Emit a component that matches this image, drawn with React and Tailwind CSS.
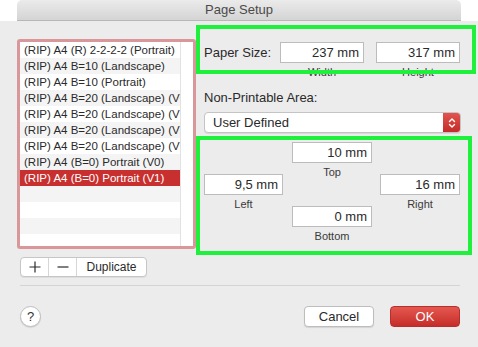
import React from 'react';

const items = [
  '(RIP) A4 (R) 2-2-2-2 (Portrait)',
  '(RIP) A4 B=10 (Landscape)',
  '(RIP) A4 B=10 (Portrait)',
  '(RIP) A4 B=20 (Landscape) (V0)',
  '(RIP) A4 B=20 (Landscape) (V1)',
  '(RIP) A4 B=20 (Landscape) (V2)',
  '(RIP) A4 B=20 (Landscape) (V3)',
  '(RIP) A4 (B=0) Portrait (V0)',
  '(RIP) A4 (B=0) Portrait (V1)',
  '',
  '',
  '',
  '',
];

const Field = ({ value, className = '' }) => (
  <div
    className={`h-[21px] bg-white border border-[#bcbcbc] text-right pr-[4px] text-[13px] leading-[19px] text-[#2a2a2a] ${className}`}
  >
    {value}
  </div>
);

const Caption = ({ children }) => (
  <div className="text-[11px] leading-[14px] text-[#3a3a3a] text-center mt-[2px]">{children}</div>
);

const App = () => {
  return (
    <div className="w-[478px] h-[347px] bg-white flex flex-col overflow-hidden" style={{ fontFamily: '"Liberation Sans", Arial, sans-serif' }}>
      {/* title bar */}
      <div className="h-[21px] mx-[17px] w-[444px] rounded-t-[5px] bg-gradient-to-b from-[#ebebeb] to-[#d4d4d4] border-b border-[#b8b8b8] flex items-center justify-center text-[13px] text-[#4a4a4a]">
        Page Setup
      </div>

      <div className="flex-1 bg-[#ececec] relative">
        <div className="flex pt-[18px] pl-[17px]">
          {/* preset list */}
          <div className="w-[179px] h-[210px] border-[3px] border-[#d9979a] rounded-[3px] bg-white flex overflow-hidden">
            <div className="w-[160px] min-w-0 shrink-0 overflow-hidden">
              {items.map((t, i) => (
                <div
                  key={i}
                  className={`h-[16px] pl-[4px] text-[11.5px] leading-[16px] whitespace-nowrap overflow-hidden ${
                    i === 8 ? 'bg-[#c8302f] text-white' : i % 2 === 1 ? 'bg-[#f4f4f4] text-[#2a2a2a]' : 'bg-white text-[#2a2a2a]'
                  }`}
                >
                  {t}
                </div>
              ))}
            </div>
            <div className="flex-1 border-l border-[#e2e2e2] bg-white" />
          </div>

          {/* settings */}
          <div className="ml-[8px] w-[257px] pt-[3px]">
            <div className="flex items-start">
              <div className="w-[76px] h-[21px] text-[13px] leading-[21px] text-[#2a2a2a]">Paper Size:</div>
              <div className="w-[84px]">
                <Field value="237 mm" />
                <Caption>Width</Caption>
              </div>
              <div className="w-[84px] ml-[12px]">
                <Field value="317 mm" />
                <Caption>Height</Caption>
              </div>
            </div>

            <div className="mt-[11px] text-[13px] text-[#2a2a2a] leading-[16px]">Non-Printable Area:</div>

            <div className="mt-[6px] h-[21px] w-[257px] flex rounded-[4px] bg-white border border-[#c4c4c4] shadow-[0_1px_0_rgba(0,0,0,0.08)] overflow-hidden">
              <div className="flex-1 pl-[8px] text-[13px] leading-[19px] text-[#2a2a2a]">User Defined</div>
              <div className="w-[17px] bg-gradient-to-b from-[#e1544f] to-[#c42a27] flex items-center justify-center">
                <svg width="8" height="12" viewBox="0 0 8 12" fill="none" stroke="white" strokeWidth="1.4" strokeLinecap="round" strokeLinejoin="round">
                  <path d="M1.5 4.5 L4 2 L6.5 4.5" />
                  <path d="M1.5 7.5 L4 10 L6.5 7.5" />
                </svg>
              </div>
            </div>

            <div className="flex items-start mt-[9px]">
              <div className="w-[79px] mt-[32px]">
                <Field value="9,5 mm" />
                <Caption>Left</Caption>
              </div>
              <div className="w-[80px] ml-[9px]">
                <Field value="10 mm" />
                <Caption>Top</Caption>
                <div className="mt-[27px]">
                  <Field value="0 mm" />
                  <Caption>Bottom</Caption>
                </div>
              </div>
              <div className="w-[80px] ml-[8px] mt-[32px]">
                <Field value="16 mm" />
                <Caption>Right</Caption>
              </div>
            </div>
          </div>
        </div>

        {/* + - Duplicate */}
        <div className="ml-[20px] mt-[8px] flex h-[20px] w-[127px] bg-white border border-[#c6c6c6] rounded-[4px] shadow-[0_1px_0_rgba(0,0,0,0.06)] text-[#2a2a2a]">
          <div className="w-[28px] flex items-center justify-center border-r border-[#d6d6d6]">
            <svg width="12" height="12" viewBox="0 0 12 12" stroke="#2a2a2a" strokeWidth="1.2">
              <path d="M6 0.5 V11.5 M0.5 6 H11.5" />
            </svg>
          </div>
          <div className="w-[28px] flex items-center justify-center border-r border-[#d6d6d6]">
            <svg width="12" height="12" viewBox="0 0 12 12" stroke="#2a2a2a" strokeWidth="1.2">
              <path d="M0.5 6 H11.5" />
            </svg>
          </div>
          <div className="flex-1 flex items-center justify-center text-[12px]">Duplicate</div>
        </div>

        <div className="ml-[20px] w-[440px] mt-[8px] h-px bg-[#d4d4d4]" />

        <div className="flex items-center mt-[20px] pl-[20px] pr-[18px]">
          <div className="w-[21px] h-[21px] rounded-full bg-white border border-[#bdbdbd] shadow-[0_1px_1px_rgba(0,0,0,0.1)] flex items-center justify-center text-[13px] text-[#333]">
            ?
          </div>
          <div className="flex-1" />
          <div className="w-[70px] h-[21px] rounded-[4px] bg-white border border-[#bdbdbd] shadow-[0_1px_1px_rgba(0,0,0,0.1)] flex items-center justify-center text-[13px] text-[#2a2a2a]">
            Cancel
          </div>
          <div className="ml-[16px] w-[70px] h-[21px] rounded-[4px] bg-gradient-to-b from-[#e4574f] to-[#c62c29] border border-[#b3302c] flex items-center justify-center text-[13px] text-white">
            OK
          </div>
        </div>

        {/* annotation overlays */}
        <div className="absolute left-[196px] top-[4px] w-[280px] h-[49px] border-[4px] border-[#1ef03b] pointer-events-none" />
        <div className="absolute left-[196px] top-[115px] w-[276px] h-[119px] border-[4px] border-[#1ef03b] pointer-events-none" />
      </div>
    </div>
  );
};

export default App;
